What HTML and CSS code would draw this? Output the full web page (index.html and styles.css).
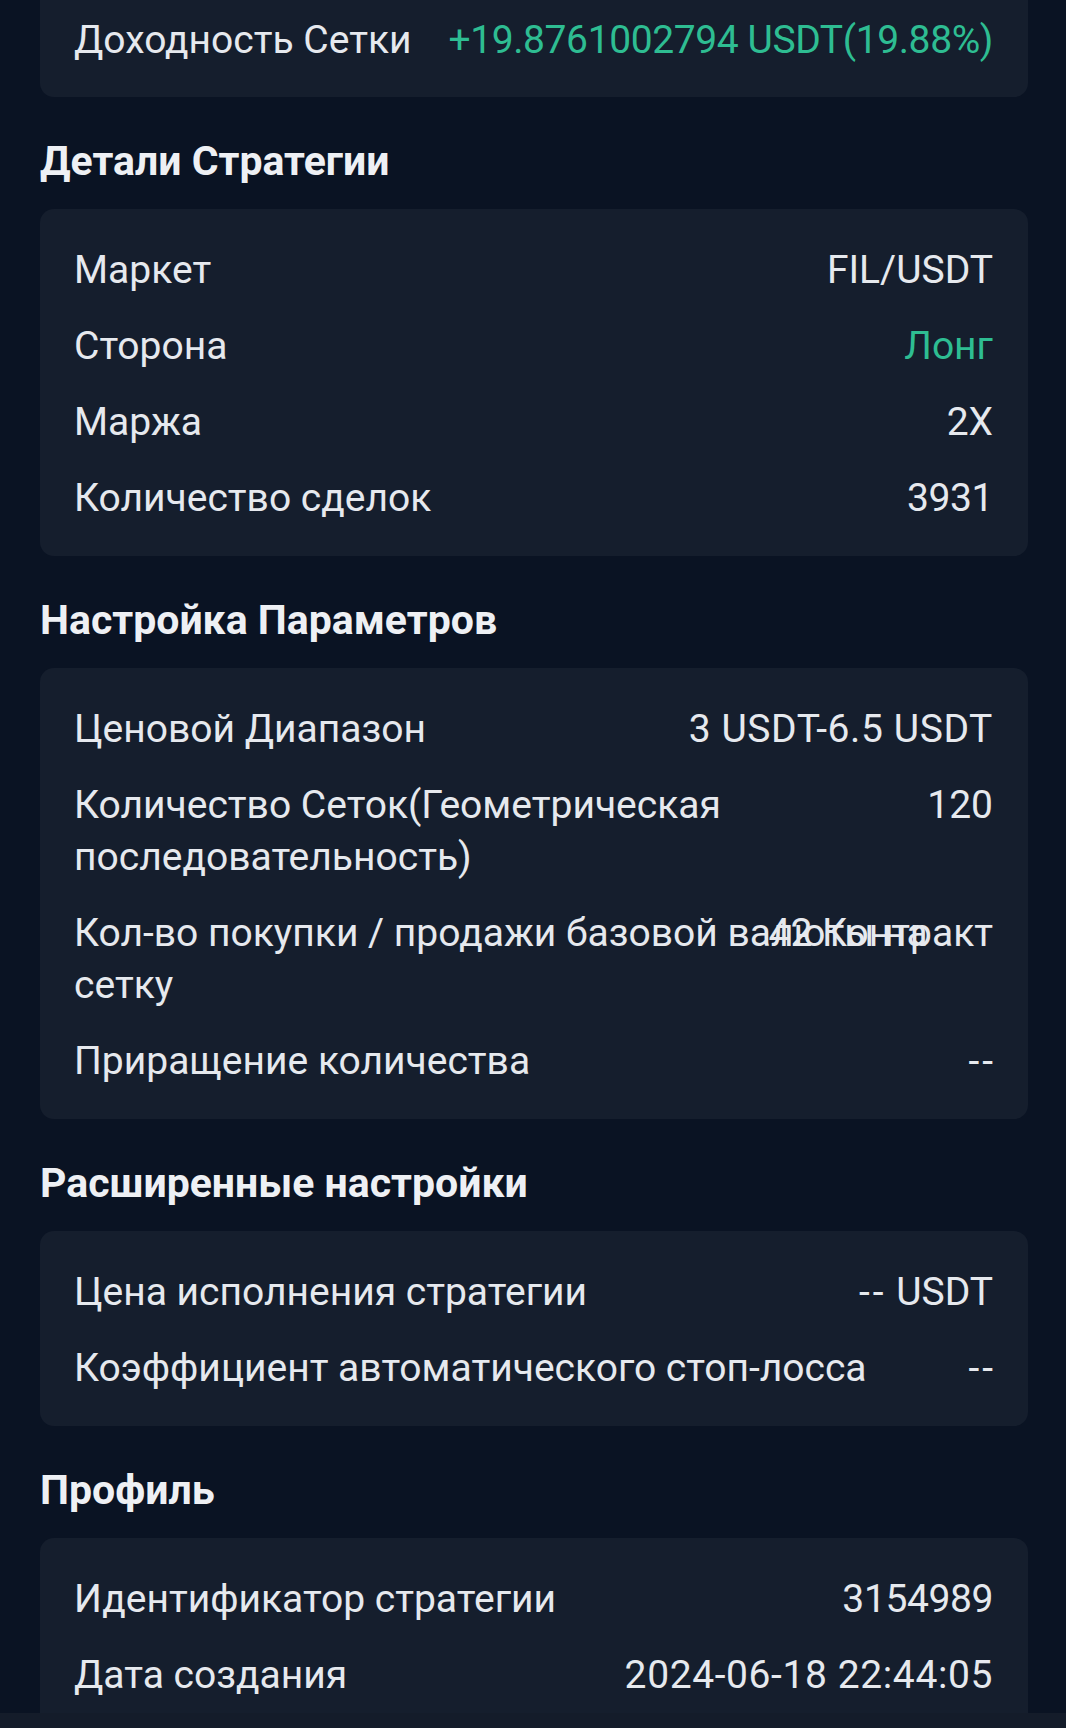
FILE: index.html
```html
<!DOCTYPE html>
<html lang="ru">
<head>
<meta charset="utf-8">
<link rel="stylesheet" href="styles.css">
</head>
<body>
<main class="page">
  <section class="card card-first">
    <div class="row"><span class="label">Доходность Сетки</span><span class="value green tight">+19.8761002794 USDT(19.88%)</span></div>
  </section>

  <h2 class="heading">Детали Стратегии</h2>
  <section class="card">
    <div class="row"><span class="label">Маркет</span><span class="value">FIL/USDT</span></div>
    <div class="row"><span class="label">Сторона</span><span class="value green">Лонг</span></div>
    <div class="row"><span class="label">Маржа</span><span class="value">2X</span></div>
    <div class="row"><span class="label">Количество сделок</span><span class="value tight">3931</span></div>
  </section>

  <h2 class="heading">Настройка Параметров</h2>
  <section class="card">
    <div class="row"><span class="label">Ценовой Диапазон</span><span class="value wide">3 USDT-6.5 USDT</span></div>
    <div class="row"><span class="label">Количество Сеток(Геометрическая последовательность)</span><span class="value">120</span></div>
    <div class="row row-overlap"><span class="label">Кол-во покупки / продажи базовой валюты на сетку</span><span class="value">42 Контракт</span></div>
    <div class="row"><span class="label">Приращение количества</span><span class="value dash">--</span></div>
  </section>

  <h2 class="heading">Расширенные настройки</h2>
  <section class="card">
    <div class="row"><span class="label">Цена исполнения стратегии</span><span class="value"><span class="dash">--</span> USDT</span></div>
    <div class="row"><span class="label">Коэффициент автоматического стоп-лосса</span><span class="value dash">--</span></div>
  </section>

  <h2 class="heading">Профиль</h2>
  <section class="card card-last">
    <div class="row"><span class="label">Идентификатор стратегии</span><span class="value tight">3154989</span></div>
    <div class="row"><span class="label">Дата создания</span><span class="value wide">2024-06-18 22:44:05</span></div>
  </section>
</main>
<div class="bottom-bar"></div>
</body>
</html>
```

FILE: styles.css
```css
* { box-sizing: border-box; }
html, body {
  margin: 0;
  padding: 0;
  background: #0a1323;
}
body {
  font-family: Roboto, "Noto Sans", sans-serif;
  color: #e6e9ee;
  overflow: hidden;
  height: 1728px;
}
.page {
  padding: 0 38px 0 40px;
}
.card {
  background: #151e2d;
  border-radius: 14px;
  padding: 35px 35px 32px 34px;
  display: flex;
  flex-direction: column;
  gap: 24px;
}
.card-first {
  border-radius: 0 0 14px 14px;
  padding-top: 14px;
  padding-bottom: 31px;
}
.card-last {
  padding-bottom: 60px;
}
.row {
  display: flex;
  justify-content: space-between;
  align-items: flex-start;
  gap: 20px;
  font-size: 39px;
  line-height: 52px;
}
.label {
  flex: 1 1 auto;
  min-width: 0;
  color: #e6e9ee;
}
.value {
  flex: 0 0 auto;
  text-align: right;
  white-space: nowrap;
  color: #e6e9ee;
}
.tight {
  letter-spacing: -0.4px;
}
.wide {
  letter-spacing: 0.6px;
}
.dash {
  letter-spacing: 3px;
  margin-right: -3px;
}
.value .dash {
  margin-right: 0;
}
.green {
  color: #2ebd92;
}
.row-overlap {
  display: grid;
  grid-template-columns: 1fr;
}
.row-overlap .label,
.row-overlap .value {
  grid-area: 1 / 1;
}
.row-overlap .value {
  justify-self: end;
}
.heading {
  margin: 0;
  padding: 40px 0 24px 0;
  font-size: 41px;
  line-height: 48px;
  font-weight: 700;
  color: #eef0f4;
}
.bottom-bar {
  position: fixed;
  left: 0;
  right: 0;
  bottom: 0;
  height: 15px;
  background: #141c2a;
}
```
